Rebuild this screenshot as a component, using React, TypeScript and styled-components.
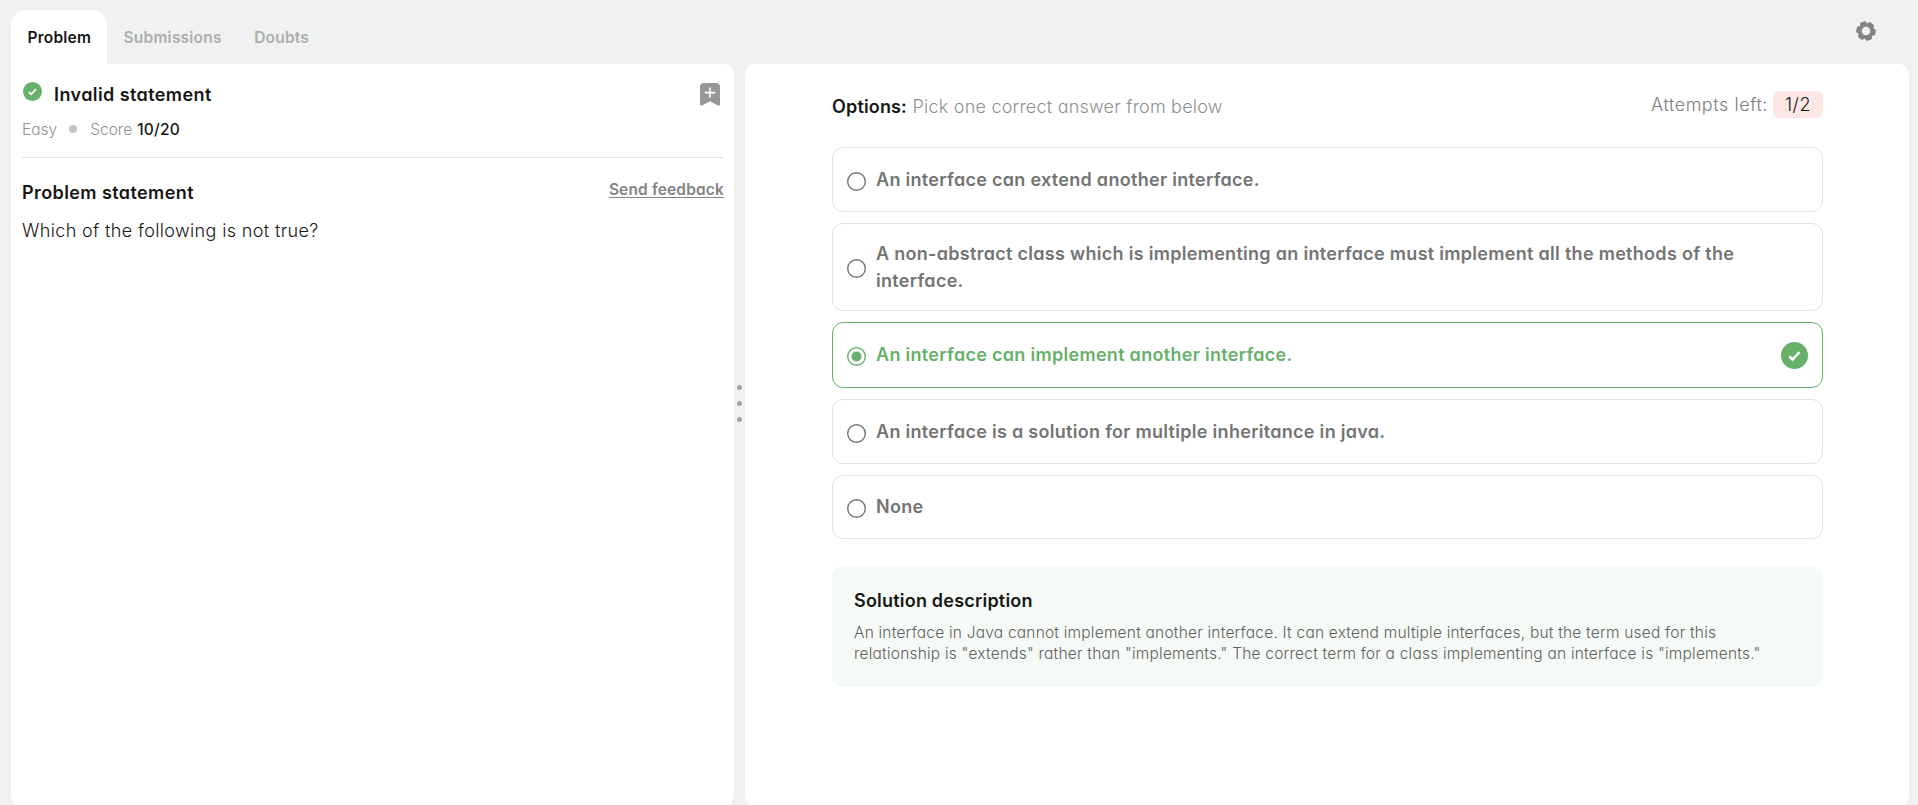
import React from "react";
import styled, { createGlobalStyle, css } from "styled-components";

const GREEN = "#66b06a";

const GlobalStyle = createGlobalStyle`
  *, *::before, *::after { box-sizing: border-box; }
  body {
    margin: 0;
    background: #f0f2f1;
    color: #161616;
    font-family: Inter, "Open Sans", sans-serif;
    font-feature-settings: "cv11";
  }
  h1, h2, h3, p { margin: 0; }
  svg { display: block; flex: none; }
`;

const Page = styled.div`
  display: flex;
  flex-direction: column;
  height: 805px;
  overflow: hidden;
`;

const TopBar = styled.header`
  display: flex;
  justify-content: space-between;
  height: 64px;
  padding: 10px 42px 0 11px;
`;

const Tabs = styled.nav`
  display: flex;
`;

const Tab = styled.button<{ $active?: boolean }>`
  height: 54px;
  padding: 1px 16px 0 16.5px;
  border: 0;
  border-radius: 15px 15px 0 0;
  background: ${(p) => (p.$active ? "#fff" : "transparent")};
  color: ${(p) => (p.$active ? "#161616" : "#adaeae")};
  font: 590 15.5px/53px Inter, sans-serif;
  font-feature-settings: inherit;
  letter-spacing: 0.21px;
`;

const Settings = styled.div`
  padding-top: 11px;
`;

const Workspace = styled.main`
  display: flex;
  height: 742px;
  flex: none;
  padding: 0 9px 0 11px;
`;

const ProblemPanel = styled.section`
  width: 723px;
  padding: 16px 10px 0 11px;
  border-radius: 0 10px 10px 10px;
  background: #fff;
`;

const Splitter = styled.div`
  display: flex;
  flex-direction: column;
  align-items: center;
  gap: 11px;
  width: 11px;
  padding-top: 321px;
`;

const Grip = styled.span`
  width: 5px;
  height: 5px;
  border-radius: 50%;
  background: #a3a5a4;
`;

const AnswerPanel = styled.section`
  flex: 1;
  padding: 0 86px 0 87px;
  border-radius: 10px;
  background: #fff;
`;

const ProblemHeader = styled.div`
  height: 78px;
  border-bottom: 1px solid #dfe0e0;
`;

const TitleRow = styled.div`
  display: flex;
  align-items: flex-start;
  height: 39px;
  padding: 2px 4px 0 1px;
`;

const heading = css`
  font-size: 18px;
  font-weight: 560;
  line-height: 26px;
  letter-spacing: 0.41px;
`;

const Title = styled.h1`
  ${heading}
  flex: 1;
  margin: -0.5px 0 0 12px;
`;

const Bookmark = styled.div`
  padding-top: 1px;
`;

const Meta = styled.div`
  display: flex;
  align-items: center;
  height: 20px;
  font-size: 15.5px;
  font-weight: 330;
  color: #8e8f8f;
`;

const Bullet = styled.span`
  width: 8px;
  height: 8px;
  margin: 0 13px 0 12px;
  border-radius: 50%;
  background: #c2c3c3;
`;

const Score = styled.strong`
  margin-left: 5px;
  color: #161616;
  font-weight: 500;
  letter-spacing: 0.25px;
`;

const StatementRow = styled.div`
  display: flex;
  justify-content: space-between;
  align-items: flex-start;
  height: 50px;
  padding-top: 22px;
`;

const StatementTitle = styled.h2`
  ${heading}
`;

const Feedback = styled.a`
  color: #838484;
  font-size: 15.5px;
  font-weight: 560;
  line-height: 20px;
  letter-spacing: 0.15px;
  text-decoration: underline;
  text-underline-offset: 2px;
  text-decoration-thickness: 1px;
  text-decoration-skip-ink: none;
`;

const Question = styled.p`
  margin-top: 9.5px;
  font-size: 18px;
  font-weight: 340;
  line-height: 26px;
  letter-spacing: 0.36px;
`;

const AnswerHeader = styled.div`
  display: flex;
  justify-content: space-between;
  align-items: flex-start;
  height: 83px;
  padding-top: 27px;
  font-size: 18px;
  font-weight: 340;
  line-height: 27px;
`;

const Prompt = styled.p`
  padding-top: 1.5px;
  color: #8e8f8f;
  letter-spacing: 0.22px;
`;

const PromptLabel = styled.b`
  margin-right: 5.5px;
  color: #161616;
  font-weight: 590;
  letter-spacing: 0.16px;
`;

const Attempts = styled.div`
  display: flex;
  color: #7c7d7d;
  letter-spacing: 0.54px;
`;

const AttemptCount = styled.span`
  width: 50px;
  margin-left: 5px;
  border-radius: 6px;
  background: #fde7e5;
  color: #161616;
  text-align: center;
`;

const OptionList = styled.div`
  display: flex;
  flex-direction: column;
  gap: 11px;
`;

const Option = styled.div<{ $height: number; $correct?: boolean }>`
  display: flex;
  align-items: center;
  height: ${(p) => p.$height}px;
  padding: 0 14px;
  border: 1px solid ${(p) => (p.$correct ? GREEN : "#e2e2e2")};
  border-radius: 11px;
  color: ${(p) => (p.$correct ? GREEN : "#737474")};
`;

const RadioIcon = styled.svg`
  margin: 3px 10px 0 0;
`;

const OptionText = styled.p`
  flex: 1;
  padding: 0 40px 0.5px 0;
  font-size: 18px;
  font-weight: 590;
  line-height: 27px;
  letter-spacing: 0.295px;
`;

const Solution = styled.section`
  height: 121px;
  margin-top: 27px;
  padding: 22px 22px 0;
  border-radius: 11px;
  background: #f5faf6;
`;

const SolutionTitle = styled.h3`
  ${heading}
  letter-spacing: 0.21px;
`;

const SolutionText = styled.p`
  width: 920px;
  margin-top: 8px;
  color: #5f6160;
  font-size: 15.5px;
  font-weight: 330;
  line-height: 21px;
  letter-spacing: 0.21px;
`;

const Radio = ({ checked }: { checked?: boolean }) => (
  <RadioIcon width="19" height="19" viewBox="0 0 19 19">
    <circle cx="9.5" cy="9.5" r="8.8" fill="none" stroke="currentColor" strokeWidth="1.4" />
    {checked && <circle cx="9.5" cy="9.5" r="5" fill="currentColor" />}
  </RadioIcon>
);

const CheckBadge = ({ size }: { size: number }) => (
  <svg width={size} height={size} viewBox="0 0 27 27">
    <circle cx="13.5" cy="13.5" r="13.5" fill={GREEN} />
    <path d="M8.2 14.4l3.3 3.1 7.1-7.5" fill="none" stroke="#fff" strokeWidth="2.5" />
  </svg>
);

const GearIcon = () => (
  <svg width="20" height="20" viewBox="-10 -10 20 20">
    <circle r="6.2" fill="none" stroke="#838585" strokeWidth="3.8" />
    {[10, 70, 130, 190, 250, 310].map((angle) => (
      <rect key={angle} x="5" y="-3.4" width="4.7" height="6.8" rx="2" fill="#838585" transform={`rotate(${angle})`} />
    ))}
  </svg>
);

const BookmarkIcon = () => (
  <svg width="20" height="23" viewBox="0 0 20 23">
    <path d="M4 0h12a4 4 0 0 1 4 4v17.3a1.3 1.3 0 0 1-2.1 1.1L10 18.2l-7.9 4.2A1.3 1.3 0 0 1 0 21.3V4a4 4 0 0 1 4-4z" fill="#979797" />
    <path d="M10 4.5v10.3M4.8 9.6h10.4" stroke="#fff" strokeWidth="1.6" />
  </svg>
);

const options = [
  { text: "An interface can extend another interface.", height: 65 },
  { text: "A non-abstract class which is implementing an interface must implement all the methods of the interface.", height: 88 },
  { text: "An interface can implement another interface.", height: 66, correct: true },
  { text: "An interface is a solution for multiple inheritance in java.", height: 65 },
  { text: "None", height: 64 },
];

export default function App() {
  return (
    <Page>
      <GlobalStyle />
      <TopBar>
        <Tabs>
          <Tab $active>Problem</Tab>
          <Tab>Submissions</Tab>
          <Tab>Doubts</Tab>
        </Tabs>
        <Settings>
          <GearIcon />
        </Settings>
      </TopBar>
      <Workspace>
        <ProblemPanel>
          <ProblemHeader>
            <TitleRow>
              <CheckBadge size={19} />
              <Title>Invalid statement</Title>
              <Bookmark>
                <BookmarkIcon />
              </Bookmark>
            </TitleRow>
            <Meta>
              <span>Easy</span>
              <Bullet />
              <span>Score</span>
              <Score>10/20</Score>
            </Meta>
          </ProblemHeader>
          <StatementRow>
            <StatementTitle>Problem statement</StatementTitle>
            <Feedback>Send feedback</Feedback>
          </StatementRow>
          <Question>Which of the following is not true?</Question>
        </ProblemPanel>
        <Splitter>
          <Grip />
          <Grip />
          <Grip />
        </Splitter>
        <AnswerPanel>
          <AnswerHeader>
            <Prompt>
              <PromptLabel>Options:</PromptLabel>
              Pick one correct answer from below
            </Prompt>
            <Attempts>
              Attempts left:
              <AttemptCount>1/2</AttemptCount>
            </Attempts>
          </AnswerHeader>
          <OptionList>
            {options.map((o) => (
              <Option key={o.text} $height={o.height} $correct={o.correct}>
                <Radio checked={o.correct} />
                <OptionText>{o.text}</OptionText>
                {o.correct && <CheckBadge size={27} />}
              </Option>
            ))}
          </OptionList>
          <Solution>
            <SolutionTitle>Solution description</SolutionTitle>
            <SolutionText>
              An interface in Java cannot implement another interface. It can extend multiple interfaces, but the term used for this
              relationship is "extends" rather than "implements." The correct term for a class implementing an interface is "implements."
            </SolutionText>
          </Solution>
        </AnswerPanel>
      </Workspace>
    </Page>
  );
}
